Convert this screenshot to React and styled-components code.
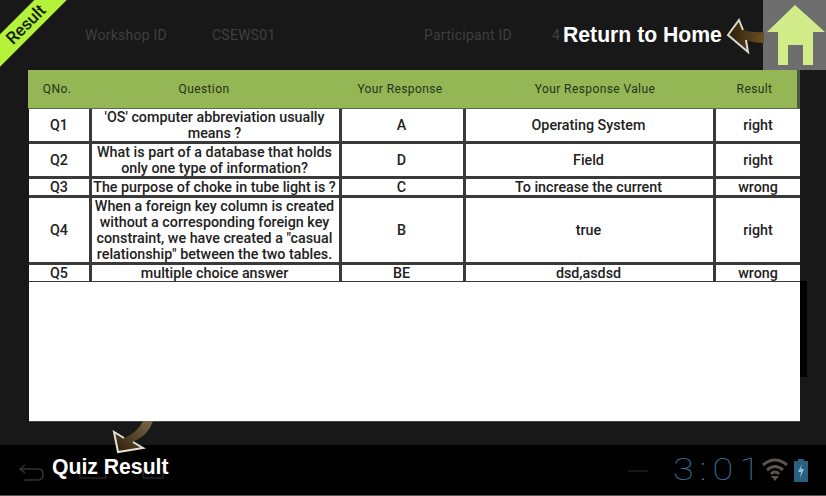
import React from "react";
import styled, { createGlobalStyle } from "styled-components";

const Global = createGlobalStyle`
  html, body { margin: 0; padding: 0; background: #000; }
  * { box-sizing: border-box; }
  body { font-family: Roboto, "Liberation Sans", sans-serif; }
`;

const Page = styled.div`
  position: relative;
  width: 826px;
  height: 496px;
  overflow: hidden;
  background: #181818;
  display: flex;
  flex-direction: column;
`;

const Header = styled.header`
  height: 70px;
  display: flex;
  align-items: center;
  padding-left: 85px;
  font-size: 14px;
  color: #3f3f3f;
`;
const Meta = styled.span`
  width: ${p => p.$w}px;
  flex: none;
  letter-spacing: 0.25px;
`;
const HomeTile = styled.div`
  margin-left: auto;
  width: 63px;
  height: 70px;
  background: #6e6e6e;
  display: flex;
`;

const Main = styled.main`
  flex: 1;
  padding-left: 29px;
  display: flex;
  flex-direction: column;
  align-items: flex-start;
`;
const TableWrap = styled.div`
  width: 771px;
  height: 352px;
  background: #fff;
  border-bottom: 1px solid #444;
`;
const HeadRow = styled.div`
  display: grid;
  grid-template-columns: 58px 236px 156px 234px 85px;
  margin-left: -1px;
  width: 772px;
  height: 39px;
  align-items: center;
  background: #94b655;
  border-bottom: 1px solid #5f6b50;
  border-right: 3px solid #4f5a45;
  color: #26331a;
  font-size: 12px;
  letter-spacing: 0.4px;
  text-align: center;
`;
const Grid = styled.div`
  display: grid;
  grid-template-columns: 60px 247px 121px 247px 1fr;
  gap: 3px;
  background: #3a3a3a;
  padding-bottom: 1px;
`;
const Cell = styled.div`
  background: #fff;
  display: flex;
  align-items: center;
  justify-content: center;
  text-align: center;
  color: #222;
  font-size: 14.3px;
  font-weight: 500;
  line-height: 16px;
  min-height: ${p => p.$h}px;
  padding-right: ${p => (p.$mid ? 2 : 0)}px;
`;
const SideBar = styled.div`
  position: absolute;
  left: 800px;
  top: 281px;
  width: 7px;
  height: 96px;
  background: #000;
`;

const Footer = styled.footer`
  height: 51px;
  margin-top: 23px;
  background: #000;
  border-bottom: 1px solid #555;
  display: flex;
  align-items: center;
  padding: 0 18px;
`;
const NavIcons = styled.div`
  display: flex;
  align-items: center;
  gap: 35px;
  margin-top: 4px;
`;
const DimDash = styled.span`
  margin-left: auto;
  width: 20px;
  height: 2px;
  margin-top: 2px;
  background: #161616;
`;
const Clock = styled.span`
  margin-left: 25px;
  width: 84px;
  flex: none;
  font-weight: 100;
  font-size: 31px;
  line-height: 36px;
  letter-spacing: 5px;
  color: #3a7aa8;
  white-space: nowrap;
  transform: scaleX(1.22);
  transform-origin: left center;
`;
const StatusIcons = styled.div`
  display: flex;
  align-items: center;
  gap: 6px;
  margin-left: 5px;
  flex: none;
`;
const Ribbon = styled.div`
  position: absolute;
  left: -44px;
  top: 13px;
  width: 140px;
  height: 23px;
  background: #b4f23c;
  color: #10200a;
  font-size: 17px;
  font-weight: 500;
  line-height: 23px;
  text-align: center;
  transform: rotate(-45deg);
`;
const Callout = styled.div`
  position: absolute;
  left: ${p => p.$x}px;
  top: ${p => p.$y}px;
  color: #fff;
  font-family: "Liberation Sans", Arial, sans-serif;
  font-size: 21.2px;
  font-weight: 700;
  line-height: 24px;
  white-space: nowrap;
`;
const Overlay = styled.svg`
  position: absolute;
  left: ${p => p.$x}px;
  top: ${p => p.$y}px;
`;
const Ghost = styled.span`
  position: absolute;
  left: 552px;
  top: 27px;
  font-size: 14px;
  color: #3f3f3f;
`;

const heads = ["QNo.", "Question", "Your Response", "Your Response Value", "Result"];
const rows = [
  { h: 32, c: ["Q1", "'OS' computer abbreviation usually means ?", "A", "Operating System", "right"] },
  { h: 32, c: ["Q2", "What is part of a database that holds only one type of information?", "D", "Field", "right"] },
  { h: 16, c: ["Q3", "The purpose of choke in tube light is ?", "C", "To increase the current", "wrong"] },
  { h: 64, c: ["Q4", 'When a foreign key column is created without a corresponding foreign key constraint, we have created a "casual relationship" between the two tables.', "B", "true", "right"] },
  { h: 16, c: ["Q5", "multiple choice answer", "BE", "dsd,asdsd", "wrong"] },
];

export default function App() {
  return (
    <Page>
      <Global />
      <Header>
        <Meta $w={127}>Workshop ID</Meta>
        <Meta $w={212}>CSEWS01</Meta>
        <Meta $w={128}>Participant ID</Meta>
        <HomeTile>
          <svg width="63" height="70" viewBox="0 0 63 70">
            <path fill="#d3ec8a" d="M32 5 L62 32 L50 32 L50 65 L40 65 L40 45 L25 45 L25 65 L15 65 L15 32 L4 32 Z" />
          </svg>
        </HomeTile>
      </Header>
      <Main>
        <TableWrap>
          <HeadRow>
            {heads.map(h => <span key={h}>{h}</span>)}
          </HeadRow>
          <Grid>
            {rows.flatMap((r, i) =>
              r.c.map((t, j) => (
                <Cell key={i + "-" + j} $h={r.h} $mid={j > 0 && j < 4}>{t}</Cell>
              ))
            )}
          </Grid>
        </TableWrap>
      </Main>
      <Footer>
        <NavIcons>
          <svg width="26" height="20" viewBox="0 0 26 20" fill="none" stroke="#333" strokeWidth="1.5">
            <path d="M7 3 L2 7 L7 11 M2 7 H20 Q25 7 25 12 Q25 18 20 18 H6" />
          </svg>
          <svg width="28" height="16" viewBox="0 0 28 16" fill="none" stroke="#262626" strokeWidth="1.5">
            <path d="M1 3 V14 H27 V3" />
          </svg>
          <svg width="22" height="16" viewBox="0 0 22 16" fill="none" stroke="#262626" strokeWidth="1.5">
            <path d="M1 3 V14 H21 V3" />
          </svg>
        </NavIcons>
        <DimDash />
        <Clock>3:01</Clock>
        <StatusIcons>
          <svg width="26" height="24" viewBox="0 0 26 24" fill="none" stroke="#5a5450" strokeWidth="3">
            <path d="M1 7 Q13 -3 25 7 M5 12 Q13 5 21 12 M9 16 Q13 12 17 16" />
            <path d="M9 18 L13 23 L17 18 Z" fill="#5a5450" stroke="none" />
          </svg>
          <svg width="14" height="24" viewBox="0 0 14 24">
            <path fill="#2b5f7d" d="M4 1 H10 V3 H14 V24 H0 V3 H4 Z" />
            <path fill="#8fc4de" d="M8 6 L4 14 H7 L6 20 L10 11 H7 Z" />
          </svg>
        </StatusIcons>
      </Footer>
      <SideBar />
      <Ribbon>Result</Ribbon>
      <Ghost>4</Ghost>
      <Callout $x={563} $y={23}>Return to Home</Callout>
      <Callout $x={52} $y={455}>Quiz Result</Callout>
      <Overlay $x={726} $y={17} width="40" height="38" viewBox="0 0 40 38">
        <defs>
          <linearGradient id="arrowHome" x1="0" y1="0" x2="1" y2="0">
            <stop offset="0" stopColor="#2c1e06" />
            <stop offset="1" stopColor="#6a5226" />
          </linearGradient>
        </defs>
        <path d="M2 18 L13 3 L17 13 Q28 16 38 15 L38 26 Q28 26 20 23 L22 35 Z" fill="url(#arrowHome)" />
        <path d="M17 13 L13 3 L2 18 L22 35 L20 23" fill="none" stroke="#d8d8d0" strokeWidth="2" />
      </Overlay>
      <Overlay $x={112} $y={421} width="44" height="36" viewBox="0 0 44 36">
        <defs>
          <linearGradient id="arrowQuiz" x1="0" y1="1" x2="1" y2="0">
            <stop offset="0" stopColor="#2c1e06" />
            <stop offset="1" stopColor="#7a684a" />
          </linearGradient>
        </defs>
        <path d="M2 11 L6 31 L31 27 L21 21 Q36 15 41 0 L31 0 Q26 11 12 17 Z" fill="url(#arrowQuiz)" />
        <path d="M12 17 L2 11 L6 31 L31 27 L21 21" fill="none" stroke="#e0e0d8" strokeWidth="2" />
      </Overlay>
    </Page>
  );
}
